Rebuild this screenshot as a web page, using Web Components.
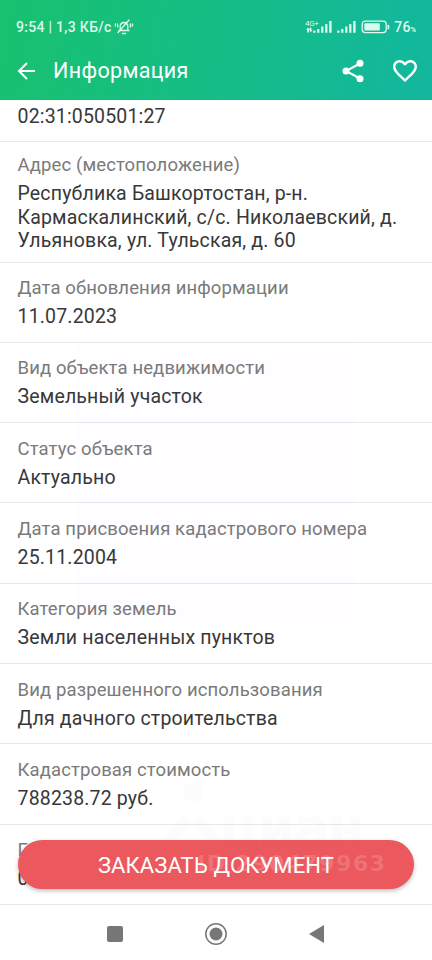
<!DOCTYPE html>
<html lang="ru">
<head>
<meta charset="utf-8">
<title>Информация</title>
<style>
html,body{margin:0;height:100%;background:#fff;font-family:Roboto,"Noto Sans",sans-serif}
</style>
</head>
<body>
<land-app></land-app>
<script>
const define = (name, html) => {
  const t = document.createElement('template');
  t.innerHTML = html;
  customElements.define(name, class extends HTMLElement {
    constructor() {
      super();
      this.attachShadow({mode: 'open'}).append(t.content.cloneNode(true));
    }
  });
};

define('status-bar', `
<style>
:host{display:flex;align-items:center;height:52px;padding:1px 16px 0;box-sizing:border-box;color:#dff8ec;font-size:14px;letter-spacing:.3px;font-weight:500}
.grow{flex:1}
svg{display:block;flex:none}
.bell{margin-left:2px}
.pct{margin-left:2px;letter-spacing:.1px}
small{font-size:7.5px;letter-spacing:0;font-weight:700}
</style>
<span class="clock">9:54 | 1,3 КБ/с</span>
<svg class="bell" width="20" height="18" viewBox="0 0 20 18" fill="none" stroke="#dff8ec" stroke-width="1.3" stroke-linecap="round">
<path d="M5 12.500h10M6.200 12V7.500a3.900 3.900 0 0 1 7.600 0V12M8.300 15.500h3.400M4 14.500L15 2M3.600 6v3M1.400 6v2M16.400 6v3M18.500 6v2"/></svg>
<span class="grow"></span>
<svg width="87" height="18" viewBox="0 0 87 18" fill="#dff8ec">
<text x="0" y="8" font-size="8" font-weight="400" letter-spacing="-.3">4G+</text>
<path d="M3 9.500l2 2.300H4v2.700H2.400l-.4-2.700H1zM5 9.500h1.400v2.600h1L5.600 14.500 4.500 12.100z"/>
<path d="M8.300 12.500h2.200v2.200H8.300zM12.200 11h2.200v3.700h-2.200zM16.200 8.500h2.200v6.200h-2.200zM20.200 6h2.200v8.700h-2.200zM24.200 3h2.400v11.700h-2.400z"/>
<path d="M32.300 12.500h2.200v2.200h-2.200zM36.200 11h2.200v3.700h-2.200zM40.200 8.500h2.200v6.200h-2.200zM44.200 6h2.200v8.700h-2.200zM48.200 3h2.400v11.700h-2.400z"/>
<rect x="57.200" y="3.200" width="24" height="11.400" rx="3" fill="none" stroke="#dff8ec" stroke-width="1.300"/>
<rect x="59.300" y="5.300" width="15.500" height="7.200" rx="1"/><path d="M82.500 6.700h.8q1 0 1 1v2.500q0 1-1 1h-.8z"/>
</svg>
<span class="pct">76<small>%</small></span>
`);

define('app-bar', `
<style>
:host{display:flex;align-items:center;height:37px;padding:0 15px 0 17px;color:#fff}
h1{margin:0 0 0 17px;flex:1;font-size:21.500px;line-height:37px;font-weight:400;letter-spacing:.35px}
svg{display:block;flex:none}
.share{margin-right:29px}
</style>
<svg width="19" height="18" viewBox="0 0 19 18" fill="none" stroke="#fff" stroke-width="2"><path d="M18 9H2.500M10 1L2 9l8 8"/></svg>
<h1><slot></slot></h1>
<svg class="share" width="22" height="24" viewBox="0 0 22 24" fill="#fff"><path d="M18 4.500L4 12l14 7.500" fill="none" stroke="#fff" stroke-width="2"/><circle cx="18" cy="4.300" r="3.500"/><circle cx="4" cy="12" r="3.500"/><circle cx="18" cy="19.700" r="3.500"/></svg>
<svg width="24" height="22" viewBox="2 3 20 18.350" fill="#fff"><path d="M16.500 3c-1.740 0-3.410.81-4.500 2.090C10.910 3.810 9.240 3 7.500 3 4.420 3 2 5.420 2 8.500c0 3.780 3.400 6.860 8.550 11.540L12 21.350l1.450-1.320C18.600 15.360 22 12.280 22 8.500 22 5.420 19.580 3 16.500 3zm-4.400 15.550l-.1.100-.1-.1C7.140 14.240 4 11.390 4 8.500 4 6.500 5.500 5 7.500 5c1.540 0 3.040.99 3.570 2.360h1.870C13.460 5.990 14.960 5 16.500 5c2 0 3.500 1.500 3.500 3.500 0 2.890-3.140 5.740-7.900 10.050z"/></svg>
`);

define('info-row', `
<style>
:host{display:block;box-sizing:border-box;height:80.300px;padding:14.700px 17.500px 0;border-bottom:1px solid #e7e8e9}
:host([tall]){height:120.500px;padding-top:12.300px}
:host([cut]){height:42px;padding-top:5px}
.label{color:#7a7a7a;font-size:18.500px;line-height:23px;letter-spacing:.12px;white-space:nowrap}
.value{color:#383838;font-size:19.500px;line-height:23.300px;letter-spacing:.17px;margin-top:5px;white-space:nowrap}
:host([cut]) .value{margin:0}
:host([cut]) .label{display:none}
</style>
<div class="label"><slot name="label"></slot></div>
<div class="value"><slot></slot></div>
`);

define('order-button', `
<style>
:host{display:block}
button{display:block;width:100%;height:49px;border:0;border-radius:25px;background:#eb585d;color:#fff;font:400 22px/49px Roboto,sans-serif;letter-spacing:.12px;padding:1px 0 0;box-shadow:0 2px 4px rgba(0,0,0,.25)}
</style>
<button><slot></slot></button>
`);

define('photo-mark', `
<style>
:host{display:block;pointer-events:none}
svg{display:block}
</style>
<svg width="240" height="100" viewBox="0 0 240 100" fill="#fff" font-family="'DejaVu Sans','Noto Sans',sans-serif" font-weight="700">
<g fill="#888" fill-opacity=".022"><circle cx="33" cy="12" r="10"/><path d="M2 61l20-27 10 12 9-12 21 27H48L32 44 15 61z"/><text x="60" y="66" font-size="54" textLength="145">циан</text></g>
<text x="37" y="91" font-size="22" textLength="188" fill-opacity=".16">ID 290479963</text>
</svg>
`);

define('nav-bar', `
<style>
:host{display:flex;align-items:center;height:55px;padding:2px 107px 0 106px;justify-content:space-between;box-sizing:border-box}
svg{display:block}
</style>
<svg width="18" height="24" viewBox="0 0 18 24"><rect x="1" y="4" width="16" height="16" rx="2" fill="#777"/></svg>
<svg width="24" height="24" viewBox="0 0 24 24"><circle cx="12" cy="12" r="10.200" fill="none" stroke="#777" stroke-width="1.500"/><circle cx="12" cy="12" r="6.500" fill="#777"/></svg>
<svg width="17" height="24" viewBox="0 0 17 24"><path d="M1 12L16 3v18z" fill="#777"/></svg>
`);

define('land-app', `
<style>
:host{display:grid;grid-template-rows:100px 805px 55px;position:relative;height:960px;overflow:hidden}
header{background:linear-gradient(100deg,#18c16e 0%,#15bd86 50%,#12b79e 100%)}
main{overflow:hidden;box-sizing:border-box}
.tint{position:absolute;left:76px;top:343px;width:279px;height:280px;background:rgba(150,60,220,.010)}
order-button{position:absolute;left:18px;top:840px;width:396px}
photo-mark{position:absolute;left:160px;top:780px}
</style>
<header><status-bar></status-bar><app-bar>Информация</app-bar></header>
<main>
<info-row cut>02:31:050501:27</info-row>
<info-row tall><span slot="label">Адрес (местоположение)</span>Республика Башкортостан, р-н.<br>Кармаскалинский, с/с. Николаевский, д.<br>Ульяновка, ул. Тульская, д. 60</info-row>
<info-row><span slot="label">Дата обновления информации</span>11.07.2023</info-row>
<info-row><span slot="label">Вид объекта недвижимости</span>Земельный участок</info-row>
<info-row><span slot="label">Статус объекта</span>Актуально</info-row>
<info-row><span slot="label">Дата присвоения кадастрового номера</span>25.11.2004</info-row>
<info-row><span slot="label">Категория земель</span>Земли населенных пунктов</info-row>
<info-row><span slot="label">Вид разрешенного использования</span>Для дачного строительства</info-row>
<info-row><span slot="label">Кадастровая стоимость</span>788238.72 руб.</info-row>
<info-row><span slot="label">Г</span>0</info-row>
</main>
<nav-bar></nav-bar>
<div class="tint"></div>
<order-button>ЗАКАЗАТЬ ДОКУМЕНТ</order-button>
<photo-mark></photo-mark>
`);
</script>
</body>
</html>
